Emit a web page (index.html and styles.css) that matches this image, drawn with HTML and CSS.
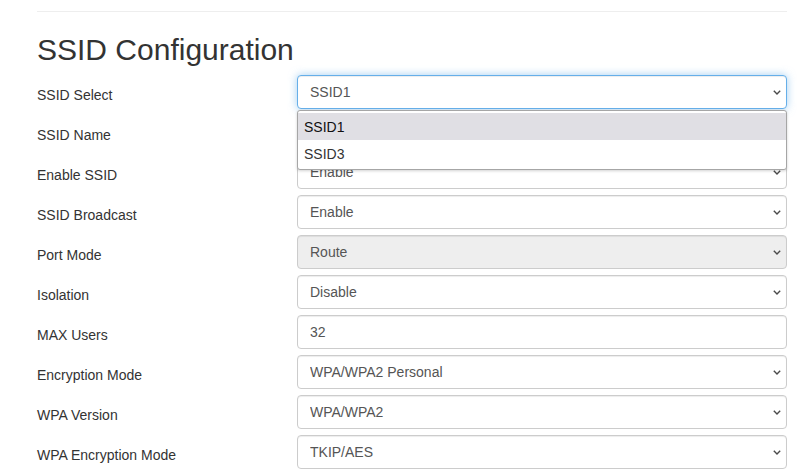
FILE: index.html
```html
<!DOCTYPE html>
<html lang="en">
<head>
<meta charset="utf-8">
<title>SSID Configuration</title>
<link rel="stylesheet" href="styles.css">
</head>
<body>
<div class="page">
  <hr class="rule">
  <h2 class="title">SSID Configuration</h2>
  <form class="form">
    <div class="row">
      <label class="label">SSID Select</label>
      <div class="field">
        <select class="control is-focus"><option>SSID1</option><option>SSID3</option></select>
        <svg class="chev" viewBox="0 0 8 5"><path d="M0.8 0.8 L4 4 L7.2 0.8"/></svg>
        <ul class="popup">
          <li class="popup-item is-active">SSID1</li>
          <li class="popup-item">SSID3</li>
        </ul>
      </div>
    </div>
    <div class="row">
      <label class="label">SSID Name</label>
      <div class="field"><input class="control" type="text" value="SSID1"></div>
    </div>
    <div class="row">
      <label class="label">Enable SSID</label>
      <div class="field">
        <select class="control"><option>Enable</option><option>Disable</option></select>
        <svg class="chev" viewBox="0 0 8 5"><path d="M0.8 0.8 L4 4 L7.2 0.8"/></svg>
      </div>
    </div>
    <div class="row">
      <label class="label">SSID Broadcast</label>
      <div class="field">
        <select class="control"><option>Enable</option><option>Disable</option></select>
        <svg class="chev" viewBox="0 0 8 5"><path d="M0.8 0.8 L4 4 L7.2 0.8"/></svg>
      </div>
    </div>
    <div class="row">
      <label class="label">Port Mode</label>
      <div class="field">
        <select class="control" disabled><option>Route</option><option>Bridge</option></select>
        <svg class="chev" viewBox="0 0 8 5"><path d="M0.8 0.8 L4 4 L7.2 0.8"/></svg>
      </div>
    </div>
    <div class="row">
      <label class="label">Isolation</label>
      <div class="field">
        <select class="control"><option>Disable</option><option>Enable</option></select>
        <svg class="chev" viewBox="0 0 8 5"><path d="M0.8 0.8 L4 4 L7.2 0.8"/></svg>
      </div>
    </div>
    <div class="row">
      <label class="label">MAX Users</label>
      <div class="field"><input class="control" type="text" value="32"></div>
    </div>
    <div class="row">
      <label class="label">Encryption Mode</label>
      <div class="field">
        <select class="control"><option>WPA/WPA2 Personal</option><option>None</option></select>
        <svg class="chev" viewBox="0 0 8 5"><path d="M0.8 0.8 L4 4 L7.2 0.8"/></svg>
      </div>
    </div>
    <div class="row">
      <label class="label">WPA Version</label>
      <div class="field">
        <select class="control"><option>WPA/WPA2</option><option>WPA2</option></select>
        <svg class="chev" viewBox="0 0 8 5"><path d="M0.8 0.8 L4 4 L7.2 0.8"/></svg>
      </div>
    </div>
    <div class="row">
      <label class="label">WPA Encryption Mode</label>
      <div class="field">
        <select class="control"><option>TKIP/AES</option><option>AES</option></select>
        <svg class="chev" viewBox="0 0 8 5"><path d="M0.8 0.8 L4 4 L7.2 0.8"/></svg>
      </div>
    </div>
  </form>
</div>
</body>
</html>
```
FILE: styles.css
```css
* { box-sizing: border-box; }

html, body {
  margin: 0;
  background: #fff;
}

body {
  font-family: "Liberation Sans", Arial, Helvetica, sans-serif;
  font-size: 14px;
  line-height: 20px;
  color: #333;
}

.page {
  padding: 11px 24px 0 37px;
}

.rule {
  margin: 0;
  border: 0;
  border-top: 1px solid #eee;
}

.title {
  margin: 21px 0 9px;
  font-size: 30px;
  font-weight: 500;
  line-height: 33px;
  color: #333;
}

.form {
  display: flex;
  flex-direction: column;
  gap: 6px;
  margin: 0;
}

.row {
  display: flex;
  height: 34px;
}

.label {
  flex: 0 0 260px;
  padding-top: 10px;
  font-weight: 400;
}

.field {
  position: relative;
  flex: 1;
}

.control {
  display: block;
  width: 100%;
  height: 34px;
  margin: 0;
  padding: 6px 12px;
  font-family: inherit;
  font-size: 14px;
  line-height: 20px;
  color: #555;
  background: #fff;
  border: 1px solid #ccc;
  border-radius: 4px;
  box-shadow: inset 0 1px 1px rgba(0, 0, 0, .075);
  -webkit-appearance: none;
  appearance: none;
  outline: none;
}

.control:disabled {
  background: #eee;
  opacity: 1;
  color: #555;
}

.control.is-focus {
  border-color: #66afe9;
  box-shadow: inset 0 1px 1px rgba(0, 0, 0, .075), 0 0 8px rgba(102, 175, 233, .6);
}

.chev {
  position: absolute;
  right: 6px;
  top: 15px;
  width: 8px;
  height: 5px;
  pointer-events: none;
}

.chev path {
  fill: none;
  stroke: #4a4a4a;
  stroke-width: 1.4;
}

/* open option list of the SSID selector */
.popup {
  position: absolute;
  z-index: 5;
  top: 35px;
  left: 0;
  right: 0;
  margin: 0;
  padding: 2px 0;
  list-style: none;
  background: #fff;
  border: 1px solid #a6a6a6;
  border-radius: 3px;
  box-shadow: 0 1px 3px rgba(0, 0, 0, .18);
}

.popup-item {
  height: 27px;
  padding: 4px 6px 0;
  line-height: 20px;
  color: #333;
}

.popup-item.is-active {
  background: #e0dfe4;
  color: #111;
}
```
